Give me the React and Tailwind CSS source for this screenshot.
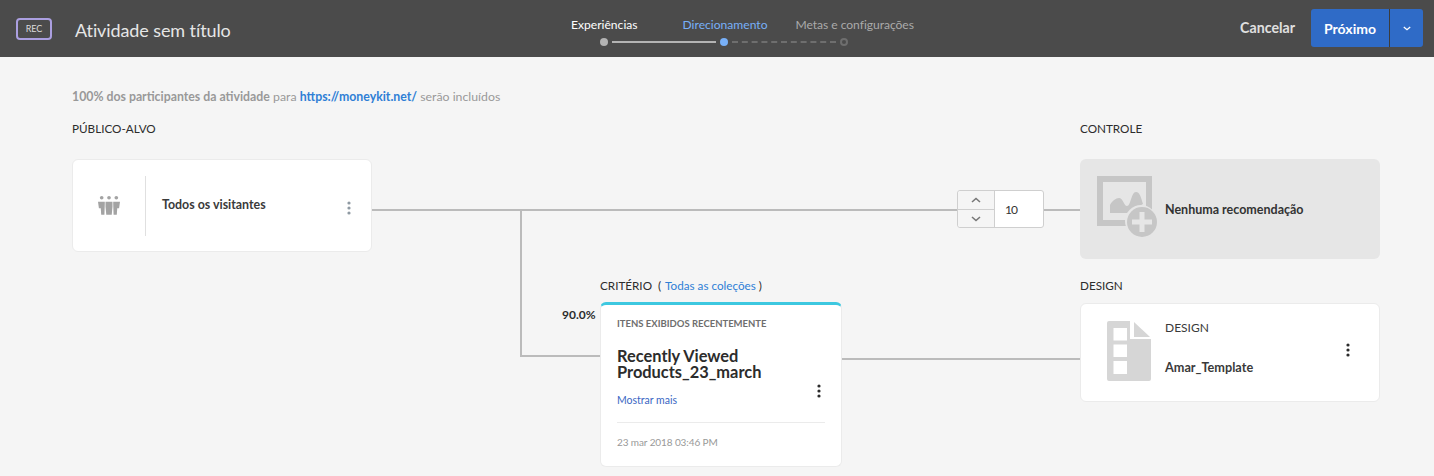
import React from 'react'

function Dots({ className }) {
  return (
    <svg width="4" height="14" viewBox="0 0 4 14" className={className}>
      <circle cx="2" cy="2" r="1.6" />
      <circle cx="2" cy="7" r="1.6" />
      <circle cx="2" cy="12" r="1.6" />
    </svg>
  )
}

function Chevron({ up, className }) {
  return (
    <svg width="10" height="6" viewBox="0 0 10 6" fill="none" stroke="currentColor" strokeWidth="1.6" className={className}>
      <path d={up ? 'M1 5l4-3.5L9 5' : 'M1 1l4 3.5L9 1'} />
    </svg>
  )
}

function Stepper() {
  return (
    <div className="flex flex-col">
      <div className="flex pl-[25px] text-[12.1px] leading-[16px]">
        <span className="text-white">Experiências</span>
        <span className="text-[#78b0f8] ml-[45px]">Direcionamento</span>
        <span className="text-[#aaaaaa] ml-[28px] tracking-[-0.05px]">Metas e configurações</span>
      </div>
      <div className="mt-[5px] ml-[54px] flex items-center h-[8px]">
        <span className="w-[8px] h-[8px] rounded-full bg-[#b3b3b3]" />
        <span className="ml-[4px] w-[104px] h-[2px] bg-[#b3b3b3]" />
        <span className="ml-[4px] w-[8px] h-[8px] rounded-full bg-[#78b0f8]" />
        <span className="ml-[4px] w-[104px] border-t-2 border-dashed border-[#6e6e6e]" />
        <span className="ml-[4px] w-[8px] h-[8px] rounded-full border-2 border-[#6e6e6e]" />
      </div>
    </div>
  )
}

function Header() {
  return (
    <header className="relative h-[57px] bg-[#4b4b4b] flex items-center justify-between pl-[16px] pr-[11px]">
      <div className="flex items-center">
        <span className="w-[36px] h-[22px] rounded-[4px] border-2 border-[#ab9fe0] text-[#dcdcdc] text-[9px] flex items-center justify-center mt-[1px]">REC</span>
        <span className="ml-[23px] text-[18px] text-[#e6e6e6] mt-[3px] tracking-[-0.1px]">Atividade sem título</span>
      </div>
      <div className="absolute left-[546px] top-[17px]">
        <Stepper />
      </div>
      <div className="flex items-center">
        <span className="text-[14.2px] font-bold text-[#e0e0e0] mr-[16px] -mt-[1px]">Cancelar</span>
        <div className="flex h-[38px] rounded-[3px] bg-[#2f6bc7] text-white -mt-[1px]">
          <span className="w-[79px] flex items-center justify-center text-[14px] font-bold border-r border-[#3c3c3c]">Próximo</span>
          <span className="w-[33px] flex items-center justify-center">
            <Chevron className="w-[8px] h-[5px]" />
          </span>
        </div>
      </div>
    </header>
  )
}

function AudienceCard() {
  return (
    <div className="mt-[23px] h-[93px] bg-white rounded-[6px] border border-[#ebebeb] flex items-center">
      <div className="w-[72px] flex justify-center">
        <svg width="22" height="21" viewBox="0 0 24 22" fill="#a3a3a3">
          <circle cx="4" cy="2.5" r="2" />
          <circle cx="12" cy="2.5" r="2" />
          <circle cx="20" cy="2.5" r="2" />
          <path d="M0 7h7.4v2.5L7 21H3.5L3 14H1z" />
          <path d="M8.2 7h7.6v5L15 21H9l-.8-9z" />
          <path d="M16.6 7H24l-1 7h-2l-.5 7H17l-.4-11.5z" />
        </svg>
      </div>
      <div className="w-px h-[60px] bg-[#e0e0e0]" />
      <span className="ml-[16px] text-[12.4px] font-bold text-[#3a3a3a] flex-1">Todos os visitantes</span>
      <Dots className="mr-[20px] mt-[5px] fill-[#8f9aa3]" />
    </div>
  )
}

function ControlCard() {
  return (
    <div className="mt-[23px] h-[100px] bg-[#e6e6e6] rounded-[6px] flex items-center pl-[17px]">
      <svg width="61" height="61" viewBox="0 0 61 61" className="-mt-[6px]">
        <path fill="#c6c6c6" fillRule="evenodd" d="M0 0h55v50H0zM6 6v38h43V6z" />
        <path fill="#c6c6c6" d="M13 37V29c2-4 6-7 9-7 4 0 5 8 8 8 4 0 4-14 9-14 4 0 5 6 7 12L30 37z" />
        <circle cx="44" cy="45" r="16" fill="#e6e6e6" />
        <circle cx="45" cy="46" r="15" fill="#c6c6c6" />
        <path fill="#e6e6e6" d="M42.5 36h5v7.5H55v5h-7.5V56h-5v-7.5H35v-5h7.5z" />
      </svg>
      <span className="ml-[7px] mt-[2px] text-[12.5px] font-bold text-[#333333]">Nenhuma recomendação</span>
    </div>
  )
}

function Spinner() {
  return (
    <div className="absolute left-[957px] top-[133px] w-[87px] h-[38px] flex border border-[#cfcfcf] rounded-[3px] bg-white text-[12px] text-[#333333]">
      <div className="w-[37px] flex flex-col border-r border-[#cfcfcf] bg-[#f5f5f5] text-[#777777] rounded-l-[3px]">
        <div className="h-[19px] flex items-center justify-center border-b border-[#cfcfcf]"><Chevron up /></div>
        <div className="flex-1 flex items-center justify-center"><Chevron /></div>
      </div>
      <span className="pl-[10px] flex items-center tracking-[-1px] mt-[1px]">10</span>
    </div>
  )
}

function CriteriaCard() {
  return (
    <div className="relative w-[242px] h-[165px] bg-white rounded-[6px] border border-[#ebebeb] border-t-[3px] border-t-[#3dc8e0] px-[16px] pt-[12px]">
      <div className="text-[9.5px] font-bold text-[#6e6e6e] leading-[14px]">ITENS EXIBIDOS RECENTEMENTE</div>
      <div className="mt-[17px] text-[16.4px] font-bold text-[#2c2c2c] leading-[16px]">
        Recently Viewed<br />Products_23_march
      </div>
      <div className="mt-[13px] text-[10.5px] text-[#3a66c4] leading-[14px]">Mostrar mais</div>
      <Dots className="absolute right-[20px] top-[79px] fill-[#2c2c2c]" />
      <div className="mt-[15px] h-px bg-[#ebebeb]" />
      <div className="mt-[12px] text-[10px] text-[#999999] leading-[14px] tracking-[-0.1px]">23 mar 2018 03:46 PM</div>
    </div>
  )
}

function DesignCard() {
  return (
    <div className="mt-[10px] h-[99px] bg-white rounded-[6px] border border-[#ebebeb] flex items-center relative">
      <svg width="44" height="60" viewBox="0 0 44 60" className="ml-[26px] -mt-[4px]">
        <path fill="#d6d6d6" d="M2 0h21v18h21v40a2 2 0 0 1-2 2H2a2 2 0 0 1-2-2V2a2 2 0 0 1 2-2z" />
        <path fill="#d6d6d6" d="M27 1l16 15H27z" />
        <rect x="6.5" y="7" width="13.5" height="12.5" fill="#fff" />
        <rect x="6.5" y="23.5" width="13.5" height="12.5" fill="#fff" />
        <rect x="6.5" y="40" width="13.5" height="13" fill="#fff" />
      </svg>
      <div className="ml-[14px] text-[12px] text-[#3a3a3a] flex flex-col -mt-[11px]">
        <span className="leading-[16px]">DESIGN</span>
        <span className="mt-[23px] text-[12.7px] font-bold leading-[16px]">Amar_Template</span>
      </div>
      <Dots className="absolute right-[29px] top-[39px] fill-[#2c2c2c]" />
    </div>
  )
}

export default function App() {
  const label = 'text-[11.7px] leading-[16px] text-[#2c2c2c]'
  return (
    <div className="w-[1434px] h-[476px] overflow-hidden bg-[#f5f5f5] font-['Lato',sans-serif]">
      <Header />
      <main className="relative h-[419px] pl-[72px] pt-[32px]">
        <p className="text-[12.3px] leading-[16px] text-[#999999]">
          <b>100% dos participantes da atividade</b> para <b className="text-[#2f7fd6]">https://moneykit.net/</b> serão incluídos
        </p>

        {/* connectors */}
        <div className="absolute left-[372px] top-[152px] w-[585px] h-[2px] bg-[#bbbbbb]" />
        <div className="absolute left-[1044px] top-[152px] w-[36px] h-[2px] bg-[#bbbbbb]" />
        <div className="absolute left-[520px] top-[152px] w-[2px] h-[148px] bg-[#bbbbbb]" />
        <div className="absolute left-[520px] top-[298px] w-[80px] h-[2px] bg-[#bbbbbb]" />
        <div className="absolute left-[842px] top-[301px] w-[238px] h-[2px] bg-[#bbbbbb]" />
        <Spinner />

        <div className="mt-[15px] flex items-start">
          <section className="w-[300px] shrink-0">
            <h2 className={label}>PÚBLICO-ALVO</h2>
            <AudienceCard />
          </section>

          <section className="relative ml-[228px] w-[242px] shrink-0 mt-[157px]">
            <h2 className={label}>CRITÉRIO &nbsp;( <span className="text-[#2f7fd6] ml-[1px]">Todas as coleções</span> )</h2>
            <div className="mt-[9px]"><CriteriaCard /></div>
            <span className="absolute -left-[38px] top-[29px] text-[12px] font-bold text-[#2c2c2c]">90.0%</span>
          </section>

          <section className="ml-[238px] w-[300px] shrink-0">
            <h2 className={label}>CONTROLE</h2>
            <ControlCard />
            <h2 className={`${label} mt-[18px]`}>DESIGN</h2>
            <DesignCard />
          </section>
        </div>
      </main>
    </div>
  )
}
